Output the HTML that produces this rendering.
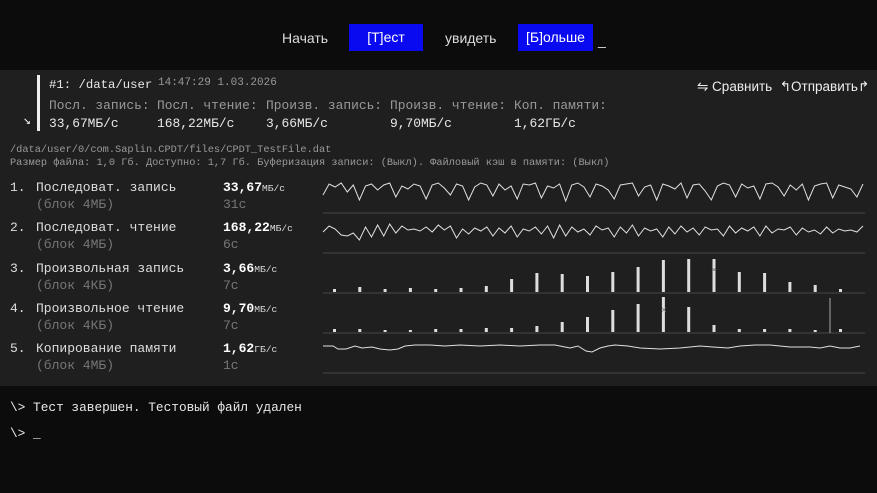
<!DOCTYPE html>
<html><head><meta charset="utf-8"><style>
*{margin:0;padding:0;box-sizing:border-box}
body{width:877px;height:493px;background:#0c0c0c;overflow:hidden;position:relative;font-family:"Liberation Mono","DejaVu Sans Mono",monospace;color:#ddd}
.a{position:absolute;white-space:pre}
.btn{position:absolute;background:#0a0af0;color:#fff;font-family:"Liberation Sans",sans-serif;font-size:14px;text-align:center;line-height:27px;height:27px}
.nav{position:absolute;font-family:"Liberation Sans",sans-serif;font-size:14px;color:#ddd;line-height:27px}
#panel{position:absolute;left:0;top:70px;width:877px;height:316px;background:#1f1f1f}
.s{font-size:12.9px;color:#999}
.v{font-size:12.9px;color:#e8e8e8}
.l{font-size:13px;color:#ddd}
.g{font-size:13px;color:#777}
.b{font-size:13px;color:#fff;font-weight:bold}
.u{font-size:9.6px;color:#ddd;font-weight:normal}
</style></head><body>
<div class="nav" style="left:282px;top:25px">Начать</div>
<div class="btn" style="left:349px;top:24px;width:74px">[Т]ест</div>
<div class="nav" style="left:445px;top:25px">увидеть</div>
<div class="btn" style="left:518px;top:24px;width:75px">[Б]ольше</div>
<div class="nav" style="left:598px;top:27px">_</div>

<div id="panel"></div>
<div class="a" style="left:37px;top:75px;width:3px;height:56px;background:#eee"></div>
<div class="a" style="left:23px;top:113px;font-size:13px;color:#eee">↘</div>
<div class="a v" style="left:49px;top:78px;font-size:12.3px">#1: /data/user</div>
<div class="a s" style="left:158px;top:77px;font-size:11px">14:47:29 1.03.2026</div>
<div class="a s" style="left:49px;top:98px">Посл. запись:</div>
<div class="a s" style="left:157px;top:98px">Посл. чтение:</div>
<div class="a s" style="left:266px;top:98px">Произв. запись:</div>
<div class="a s" style="left:390px;top:98px">Произв. чтение:</div>
<div class="a s" style="left:514px;top:98px">Коп. памяти:</div>
<div class="a v" style="left:49px;top:116px">33,67МБ/с</div>
<div class="a v" style="left:157px;top:116px">168,22МБ/с</div>
<div class="a v" style="left:266px;top:116px">3,66МБ/с</div>
<div class="a v" style="left:390px;top:116px">9,70МБ/с</div>
<div class="a v" style="left:514px;top:116px">1,62ГБ/с</div>
<div class="a" style="left:697px;top:79px;font-family:'Liberation Sans',sans-serif;font-size:13.5px;color:#eee">⇋ Сравнить  ↰Отправить↱</div>
<div class="a s" style="left:10px;top:144px;font-size:10.3px">/data/user/0/com.Saplin.CPDT/files/CPDT_TestFile.dat</div>
<div class="a s" style="left:10px;top:157px;font-size:10.3px">Размер файла: 1,0 Гб. Доступно: 1,7 Гб. Буферизация записи: (Выкл). Файловый кэш в памяти: (Выкл)</div>

<div class="a l" style="left:10px;top:180px">1.</div><div class="a l" style="left:36px;top:180px">Последоват. запись</div>
<div class="a g" style="left:36px;top:197px">(блок 4МБ)</div>
<div class="a b" style="left:223px;top:180px">33,67<span class="u">МБ/с</span></div>
<div class="a g" style="left:223px;top:197px">31с</div>
<div class="a l" style="left:10px;top:220px">2.</div><div class="a l" style="left:36px;top:220px">Последоват. чтение</div>
<div class="a g" style="left:36px;top:237px">(блок 4МБ)</div>
<div class="a b" style="left:223px;top:220px">168,22<span class="u">МБ/с</span></div>
<div class="a g" style="left:223px;top:237px">6с</div>
<div class="a l" style="left:10px;top:261px">3.</div><div class="a l" style="left:36px;top:261px">Произвольная запись</div>
<div class="a g" style="left:36px;top:278px">(блок 4КБ)</div>
<div class="a b" style="left:223px;top:261px">3,66<span class="u">МБ/с</span></div>
<div class="a g" style="left:223px;top:278px">7с</div>
<div class="a l" style="left:10px;top:301px">4.</div><div class="a l" style="left:36px;top:301px">Произвольное чтение</div>
<div class="a g" style="left:36px;top:318px">(блок 4КБ)</div>
<div class="a b" style="left:223px;top:301px">9,70<span class="u">МБ/с</span></div>
<div class="a g" style="left:223px;top:318px">7с</div>
<div class="a l" style="left:10px;top:341px">5.</div><div class="a l" style="left:36px;top:341px">Копирование памяти</div>
<div class="a g" style="left:36px;top:358px">(блок 4МБ)</div>
<div class="a b" style="left:223px;top:341px">1,62<span class="u">ГБ/с</span></div>
<div class="a g" style="left:223px;top:358px">1с</div>

<svg class="a" style="left:0;top:0" width="877" height="493">
<g stroke="#3a3a3a" stroke-width="1.5">
<line x1="323" y1="213" x2="865" y2="213"/><line x1="323" y1="253" x2="865" y2="253"/><line x1="323" y1="293" x2="865" y2="293"/><line x1="323" y1="333" x2="865" y2="333"/><line x1="323" y1="373" x2="865" y2="373"/>
</g>
<g fill="none" stroke="#e0e0e0" stroke-width="1">
<polyline id="p1" points=""/>
<polyline id="p2" points=""/>
<polyline points="323,346 333,346 338,349 346,349 355,346 362,348 372,347 380,349 390,350 398,349 405,346 415,345 430,345 445,346 460,345 480,346 500,345 520,346 540,345 555,345 570,348 578,346 586,351 592,352 600,348 608,346 615,345 628,346 640,348 660,349 680,348 700,346 713,347 728,348 740,346 755,345 770,345 790,347 810,347 820,348 830,346 840,348 850,348 860,346"/>
</g>
<g fill="#ddd" id="bars"></g>
<line x1="830" y1="298" x2="830" y2="333" stroke="#aaa" stroke-width="1"/>
<text x="711" y="273" fill="#777" font-size="10" font-family="Liberation Sans">×</text>
<text x="661" y="313" fill="#777" font-size="10" font-family="Liberation Sans">×</text>
</svg>

<div class="a" style="left:10px;top:400px;font-size:12.8px;color:#e8e8e8">\&gt; Тест завершен. Тестовый файл удален</div>
<div class="a" style="left:10px;top:426px;font-size:12.8px;color:#e8e8e8">\&gt; _</div>

<script>
var r1=[195,184,187,183,192,185,200,186,184,190,185,183,197,186,189,184,186,199,185,183,188,195,184,186,200,187,183,185,196,184,190,186,199,184,185,183,198,186,188,184,201,185,183,187,197,184,186,190,199,185,184,183,196,187,185,200,184,186,189,183,198,185,184,191,200,186,183,185,197,184,188,186,199,184,183,187,196,185,190,184,200,186,184,183,198,185,187,189,197,184];
var r2=[232,226,229,235,236,233,240,227,237,225,236,224,233,226,230,229,231,227,232,225,230,226,238,229,234,228,231,227,236,228,233,226,237,229,231,227,234,226,238,225,236,227,232,229,235,226,230,228,237,227,233,225,236,228,231,229,237,227,234,226,232,228,235,227,230,229,236,226,233,228,231,227,236,226,233,229,230,227,235,228,232,230,234,227,233,229,231,230,232,226];
function pts(a){var s=[];for(var i=0;i<a.length;i++)s.push((323+i*540/(a.length-1)).toFixed(1)+","+a[i]);return s.join(" ");}
document.getElementById("p1").setAttribute("points",pts(r1));
document.getElementById("p2").setAttribute("points",pts(r2));
var h3=[3,5,3,4,3,4,6,13,19,18,16,20,25,32,33,33,20,19,10,7,3];
var h4=[3,3,2,2,3,3,4,4,6,10,15,22,28,35,25,7,3,3,3,2,3];
var g=document.getElementById("bars"),h="";
for(var i=0;i<21;i++){var x=333+i*25.3;h+='<rect x="'+x+'" y="'+(292-h3[i])+'" width="3" height="'+h3[i]+'"/>';h+='<rect x="'+x+'" y="'+(332-h4[i])+'" width="3" height="'+h4[i]+'"/>';}
g.innerHTML=h;
</script>
</body></html>
